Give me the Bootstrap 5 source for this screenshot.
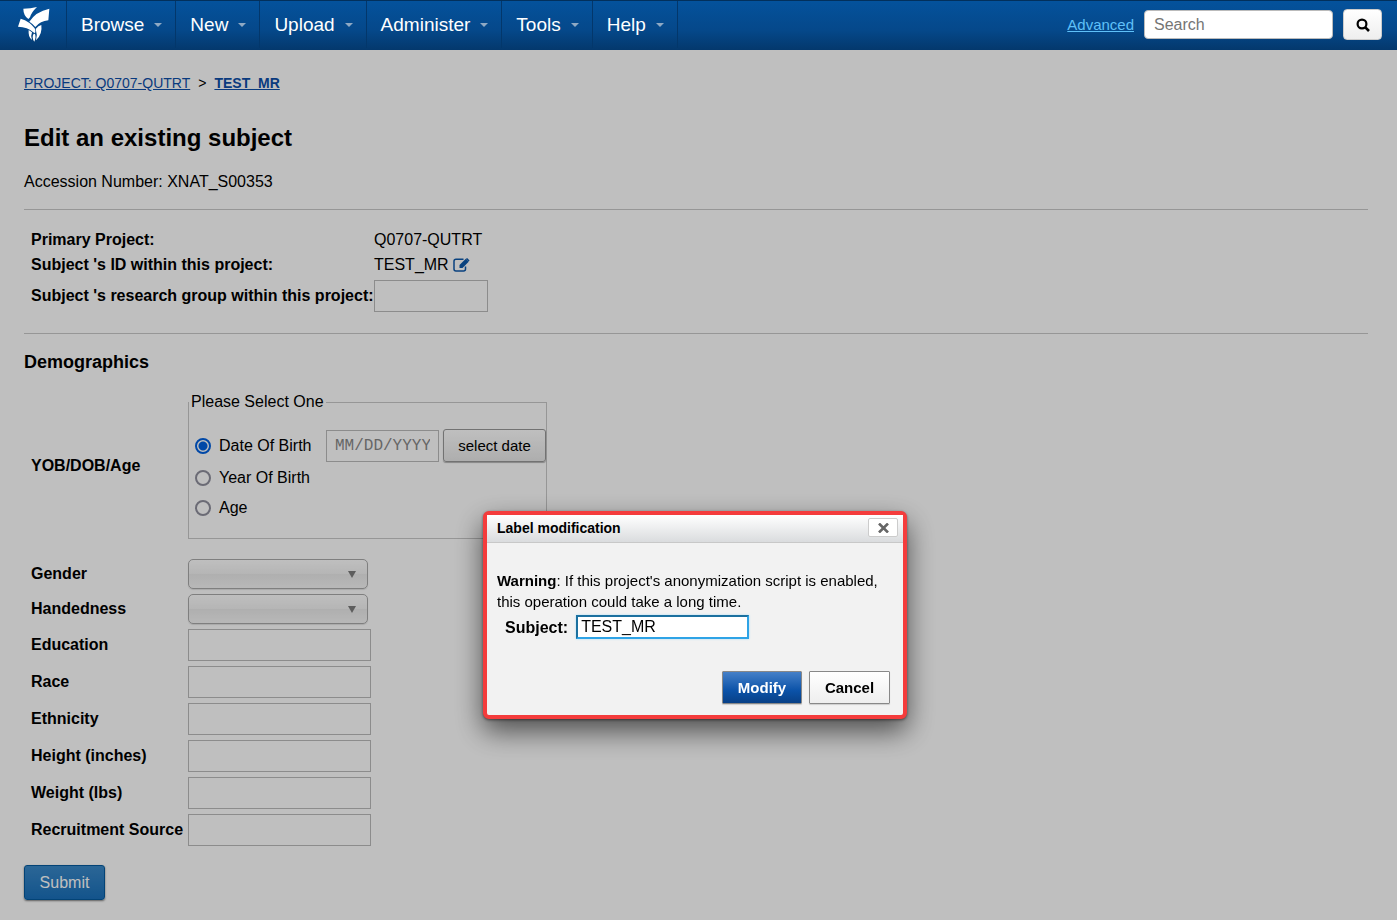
<!DOCTYPE html>
<html lang="en">
<head>
<meta charset="utf-8">
<meta name="viewport" content="width=device-width, initial-scale=1">
<title>Edit an existing subject</title>
<link href="https://cdn.jsdelivr.net/npm/bootstrap@5.3.0/dist/css/bootstrap.min.css" rel="stylesheet">
<style>
body{font-family:"Liberation Sans",Arial,sans-serif;font-size:16px;line-height:20px;color:#000;background:#fff}
.topbar{height:50px;padding-bottom:2px;background:linear-gradient(#04529c,#05488a 60%,#04386c);border-top:1px solid #02305c;z-index:1060}
.brand-link{width:67px;padding-left:18px;border-right:1px solid #03376b}
.topbar .menu-link{color:#fff;font-size:19px;padding:0 13px 0 14px;border-right:1px solid #03376b;gap:10px;white-space:nowrap}
.caret{border:4px solid transparent;border-top-color:#8fa9c4;border-bottom:0;width:8px}
.quick-search{gap:10px;padding-right:15px}
.adv-link{font-size:15px;color:#5fc0f8}
.search-box{width:189px;height:29px;border:1px solid #bbb;border-radius:4px;padding:0 9px;font-size:16px}
.search-box::placeholder{color:#757575;opacity:1}
.search-btn{width:39px;height:31px;border:1px solid #ccc;border-radius:4px;background:linear-gradient(#fff,#eee);padding:0}
.page-body{padding:23px 29px 20px 24px}
.crumbs{font-size:14px}
.crumbs a{color:#0d4ea8}
h1{font-size:24px;font-weight:700;line-height:30px;margin:30px 0 19px}
h2{font-size:18px;font-weight:700;line-height:22px;margin:17px 0 19px}
.rule{border:0;border-top:1px solid #c8c8c8;opacity:1;margin:17px 0 20px}
.rule-low{margin:21px 0 0}
.field-rows{padding-left:7px}
.id-rows{display:grid;gap:5px}
.wide-label{width:343px;font-weight:700;white-space:nowrap}
.side-label{width:157px;font-weight:700;white-space:nowrap}
.demo-rows{display:grid;gap:5px;margin-top:20px}
.field{height:32px;border:1px solid #bbb;background:#fff;border-radius:0;padding:0 8px}
.f-short{width:114px}
.f-long{width:183px}
.f-date{width:113px;font:16px "Liberation Mono",monospace}
.f-date::placeholder{color:#888;opacity:1}
.pick{width:180px;height:30px;border:1px solid #aaa;border-radius:5px;background:linear-gradient(#fff,#f2f2f2 50%,#eaeaea 51%,#f6f6f6);appearance:none;box-shadow:0 1px 1px rgba(0,0,0,.12)}
.pick-arrow{position:absolute;right:12px;top:12px;border:4px solid transparent;border-top:7px solid #7c7c7c;border-bottom:0;pointer-events:none}
.birth{width:359px;height:147px;border:1px solid #c8c8c8;padding:0 0 0 6px}
.birth legend{float:none;width:auto;font-size:16px;line-height:20px;margin:0 0 0 -6px;padding:0 2px}
.birth .opts{padding-top:17px}
.opt-year{padding-top:6px}
.opt-age{padding-top:10px}
.birth input[type=radio]{appearance:none;width:16px;height:16px;border:2px solid #8f8f9d;border-radius:50%;margin:0 8px 0 0;background:#fff}
.birth input[type=radio]:checked{border-color:#0060df;background:radial-gradient(#0060df 4px,#fff 5px)}
.date-btn{width:103px;height:33px;font-size:15px;border:1px solid #999;border-radius:3px;background:linear-gradient(#fff,#e8e8e8);box-shadow:0 1px 1px rgba(0,0,0,.3);padding:0}
.submit-btn{width:81px;height:35px;margin-top:19px;border:1px solid #045a9e;border-radius:3px;background:linear-gradient(#3a89c9,#1a70ba);color:#fff;box-shadow:0 1px 2px rgba(0,0,0,.5);padding:0}
.shade{position:fixed;inset:0;background:rgba(0,0,0,.25);z-index:1050;padding-top:511px}
.dialog-box{width:424px;margin-right:7px;border:4px solid #f43c3c;border-radius:6px;background:#f2f2f2;box-shadow:0 12px 28px rgba(0,0,0,.6),0 1px 3px rgba(0,0,0,.5)}
.dialog-head{height:28px;background:linear-gradient(#fff,#dadcde);border-bottom:1px solid #c8c8c8;padding:0 5px 2px 10px}
.dialog-head strong{font-size:14px}
.x-btn{width:30px;height:19px;border:1px solid #ccc;background:#fff;border-radius:2px;padding:0}
.dialog-main{padding:27px 8px 11px 10px;line-height:21px}
.warn-text{font-size:15px;margin-bottom:3px}
.subj-input{width:173px;height:24px;border:2px solid #2ea3e6;border-top-color:#1b709f;border-left-color:#1b709f;padding:0 3px;background:#fff;box-shadow:0 0 2px #a8dcf8;outline:0}
.dlg-actions{gap:7px;padding:32px 5px 0 0}
.dlg-btn{height:33px;font-size:15px;font-weight:700;border:1px solid #888;padding:0;box-shadow:0 1px 1px rgba(0,0,0,.15);border-radius:1px}
.dlg-ok{width:80px;color:#fff;background:linear-gradient(#4580c8,#0b52a8 60%,#084086)}
.dlg-no{width:81px;color:#000;background:linear-gradient(#fff,#eee)}
</style>
</head>
<body>
<nav class="topbar d-flex align-items-stretch position-relative" aria-label="Main">
  <a class="brand-link d-flex align-items-center" href="#" aria-label="Home">
    <svg width="32" height="35" viewBox="54 22 96 105" fill="#fff"><path d="M70 27Q92 27 111 22Q94 38 90 53L85 58Q70 47 70 27Z"/><path d="M148 27L145 62Q121 64 106 82Q98 72 88 66Q107 36 148 27Z"/><path d="M62 57Q89 65 104 86Q108 94 105 101L100 98Q83 82 54 81Z"/><path d="M107 88Q115 77 124 76Q128 104 108 122Q113 105 107 88Z"/><path d="M86 91Q84 112 96 121Q91 110 96 98Z"/><path d="M101 102Q94 113 103 126Q109 113 105 103Z"/></svg>
  </a>
  <a class="menu-link d-flex align-items-center text-decoration-none" href="#">Browse<span class="caret"></span></a>
  <a class="menu-link d-flex align-items-center text-decoration-none" href="#">New<span class="caret"></span></a>
  <a class="menu-link d-flex align-items-center text-decoration-none" href="#">Upload<span class="caret"></span></a>
  <a class="menu-link d-flex align-items-center text-decoration-none" href="#">Administer<span class="caret"></span></a>
  <a class="menu-link d-flex align-items-center text-decoration-none" href="#">Tools<span class="caret"></span></a>
  <a class="menu-link d-flex align-items-center text-decoration-none" href="#">Help<span class="caret"></span></a>
  <form class="quick-search d-flex align-items-center ms-auto">
    <a class="adv-link" href="#">Advanced</a>
    <input class="search-box" type="text" placeholder="Search" aria-label="Search">
    <button class="search-btn d-flex align-items-center justify-content-center" type="button" aria-label="Run search"><svg width="14" height="14" viewBox="0 0 14 14" fill="none" stroke="#000"><circle cx="6" cy="6" r="4.4" stroke-width="2.2"/><path d="M9.3 9.3L13 13" stroke-width="2.6"/></svg></button>
  </form>
</nav>

<main class="page-body">
  <div class="crumbs"><a href="#">PROJECT: Q0707-QUTRT</a><span class="mx-2">&gt;</span><a class="fw-bold" href="#">TEST_MR</a></div>
  <h1>Edit an existing subject</h1>
  <div>Accession Number: XNAT_S00353</div>
  <hr class="rule">
  <form>
    <div class="field-rows id-rows">
      <div class="d-flex"><span class="wide-label">Primary Project:</span><span>Q0707-QUTRT</span></div>
      <div class="d-flex align-items-center"><span class="wide-label">Subject 's ID within this project:</span><span>TEST_MR</span>
        <a class="ms-1" href="#" aria-label="Edit ID"><svg class="d-block" width="17" height="14" viewBox="0 0 17 14" fill="none" stroke="#0d58aa"><path d="M10.5 1.2H3Q1 1.2 1 3.2V11Q1 13 3 13H10.5Q12.500 13 12.500 11V8.500" stroke-width="1.5"/><path d="M6.500 7L12.800 .800L15.700 3.700L9.500 10H6.500Z" fill="#0d58aa" stroke="none"/><path d="M13.500 .500L16 3" stroke-width="1.6"/></svg></a></div>
      <div class="d-flex align-items-center"><label class="wide-label" for="grp">Subject 's research group within this project:</label><input class="field f-short" id="grp" type="text"></div>
    </div>
    <hr class="rule rule-low">
    <h2>Demographics</h2>
    <div class="field-rows">
      <div class="d-flex align-items-center">
        <span class="side-label">YOB/DOB/Age</span>
        <fieldset class="birth">
          <legend>Please Select One</legend>
          <div class="opts">
            <div class="d-flex align-items-center"><input type="radio" name="b" id="b1" checked><label for="b1">Date Of Birth</label><input class="field f-date ms-auto me-1" type="text" placeholder="MM/DD/YYYY" aria-label="Date of birth"><button class="date-btn" type="button">select date</button></div>
            <div class="opt-year d-flex align-items-center"><input type="radio" name="b" id="b2"><label for="b2">Year Of Birth</label></div>
            <div class="opt-age d-flex align-items-center"><input type="radio" name="b" id="b3"><label for="b3">Age</label></div>
          </div>
        </fieldset>
      </div>
      <div class="demo-rows">
        <div class="d-flex align-items-center"><label class="side-label" for="g">Gender</label><span class="position-relative d-flex"><select class="pick" id="g"><option></option></select><span class="pick-arrow"></span></span></div>
        <div class="d-flex align-items-center"><label class="side-label" for="h">Handedness</label><span class="position-relative d-flex"><select class="pick" id="h"><option></option></select><span class="pick-arrow"></span></span></div>
        <div class="d-flex align-items-center"><label class="side-label" for="ed">Education</label><input class="field f-long" id="ed" type="text"></div>
        <div class="d-flex align-items-center"><label class="side-label" for="ra">Race</label><input class="field f-long" id="ra" type="text"></div>
        <div class="d-flex align-items-center"><label class="side-label" for="et">Ethnicity</label><input class="field f-long" id="et" type="text"></div>
        <div class="d-flex align-items-center"><label class="side-label" for="he">Height (inches)</label><input class="field f-long" id="he" type="text"></div>
        <div class="d-flex align-items-center"><label class="side-label" for="we">Weight (lbs)</label><input class="field f-long" id="we" type="text"></div>
        <div class="d-flex align-items-center"><label class="side-label" for="rs">Recruitment Source</label><input class="field f-long" id="rs" type="text"></div>
      </div>
    </div>
    <button class="submit-btn" type="button">Submit</button>
  </form>
</main>

<div class="shade d-flex justify-content-center align-items-start">
  <section class="dialog-box" role="dialog" aria-label="Label modification">
    <div class="dialog-head d-flex align-items-center justify-content-between"><strong>Label modification</strong>
      <button class="x-btn d-flex align-items-center justify-content-center" type="button" aria-label="Close"><svg width="11" height="10" viewBox="0 0 11 10" stroke="#666" stroke-width="2.6"><path d="M1 .5L10 9.5M10 .5L1 9.5"/></svg></button></div>
    <div class="dialog-main">
      <div class="warn-text"><b>Warning</b>: If this project's anonymization script is enabled, this operation could take a long time.</div>
      <div class="d-flex align-items-center ms-2"><label class="fw-bold me-2" for="sj">Subject:</label><input class="subj-input" id="sj" type="text" value="TEST_MR"></div>
      <div class="dlg-actions d-flex justify-content-end"><button class="dlg-btn dlg-ok" type="button">Modify</button><button class="dlg-btn dlg-no" type="button">Cancel</button></div>
    </div>
  </section>
</div>
<script src="https://cdn.jsdelivr.net/npm/bootstrap@5.3.0/dist/js/bootstrap.bundle.min.js"></script>
</body>
</html>
